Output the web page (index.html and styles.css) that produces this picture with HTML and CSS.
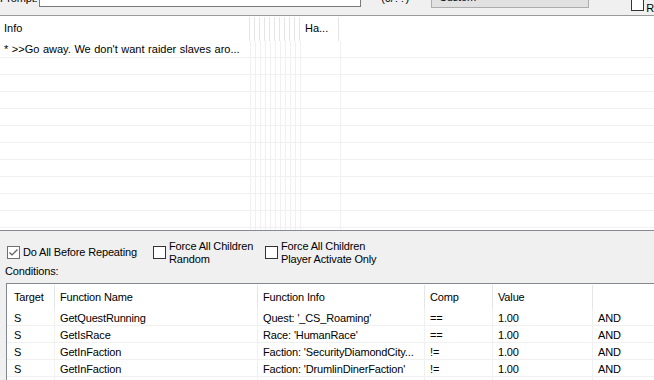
FILE: index.html
```html
<!DOCTYPE html>
<html lang="en">
<head>
    <meta charset="UTF-8">
    <title>Info</title>
    <link rel="stylesheet" href="styles.css">
</head>
<body>
    <div class="topo">
        <span class="rotulo prompt">Prompt:</span>
        <div class="entrada"></div>
        <span class="rotulo contagem">(0/??)</span>
        <div class="combo">Custom</div>
        <span class="caixa topo-caixa"></span>
        <span class="rotulo letra">R</span>
    </div>

    <div class="lista">
        <div class="lista-cab">
            <div class="cel">Info</div>
            <div class="cel"></div><div class="cel"></div><div class="cel"></div><div class="cel"></div><div class="cel"></div>
            <div class="cel"></div><div class="cel"></div><div class="cel"></div><div class="cel"></div><div class="cel"></div>
            <div class="cel">Ha...</div>
            <div class="cel fim"></div>
        </div>
        <div id="linhas"></div>
    </div>

    <div class="painel">
        <div class="opcoes">
            <label class="opcao primeira">
                <span class="caixa marcada">
                    <svg width="11" height="11" viewBox="0 0 11 11"><path d="M1.5 5.5 L4 8 L9.5 2.5" fill="none" stroke="#5a5a5a" stroke-width="1.2"/></svg>
                </span>
                <span>Do All Before Repeating</span>
            </label>
            <label class="opcao segunda">
                <span class="caixa"></span>
                <span>Force All Children<br>Random</span>
            </label>
            <label class="opcao">
                <span class="caixa"></span>
                <span>Force All Children<br>Player Activate Only</span>
            </label>
        </div>
        <div class="titulo">Conditions:</div>
        <div class="condicoes">
            <div class="cond-linha cond-cab">
                <div class="c">Target</div>
                <div class="c">Function Name</div>
                <div class="c">Function Info</div>
                <div class="c">Comp</div>
                <div class="c">Value</div>
                <div class="c"></div>
            </div>
            <div id="condicoes"></div>
        </div>
    </div>

    <script>
        const linhas = document.getElementById('linhas');
        for (let i = 0; i < 12; i++) {
            const linha = document.createElement('div');
            linha.className = 'linha';
            let html = '<div class="cel">' + (i === 0 ? "* &gt;&gt;Go away. We don't want raider slaves aro..." : '') + '</div>';
            for (let j = 0; j < 11; j++) html += '<div class="cel"></div>';
            html += '<div class="cel fim"></div>';
            linha.innerHTML = html;
            linhas.appendChild(linha);
        }

        const condicoes = [
            ['S', 'GetQuestRunning', "Quest: '_CS_Roaming'", '==', '1.00', 'AND'],
            ['S', 'GetIsRace', "Race: 'HumanRace'", '==', '1.00', 'AND'],
            ['S', 'GetInFaction', "Faction: 'SecurityDiamondCity...", '!=', '1.00', 'AND'],
            ['S', 'GetInFaction', "Faction: 'DrumlinDinerFaction'", '!=', '1.00', 'AND'],
            ['', '', '', '', '', '']
        ];
        const tabela = document.getElementById('condicoes');
        condicoes.forEach(function (c) {
            const linha = document.createElement('div');
            linha.className = 'cond-linha';
            c.forEach(function (v) {
                const cel = document.createElement('div');
                cel.className = 'c';
                cel.textContent = v;
                linha.appendChild(cel);
            });
            tabela.appendChild(linha);
        });
    </script>
</body>
</html>
```

FILE: styles.css
```css
body {
    margin: 0;
    width: 654px;
    height: 380px;
    overflow: hidden;
    background-color: #f0f0f0;
    font-family: "Liberation Sans", Arial, sans-serif;
    font-size: 11px;
    letter-spacing: -0.15px;
    color: #000;
}

/* faixa de cima, cortada pela janela */
.topo {
    height: 15px;
    display: flex;
    align-items: flex-end;
    overflow: hidden;
    border-bottom: 1px solid #9a9a9a;
}

.rotulo {
    line-height: 13px;
    white-space: nowrap;
}

.prompt {
    width: 39px;
    margin-bottom: 10px;
}

.entrada {
    width: 322px;
    height: 20px;
    margin-bottom: 8px;
    background-color: #fff;
    border: 1px solid #7a7a7a;
}

.contagem {
    margin-left: 20px;
    width: 50px;
    margin-bottom: 10px;
}

.combo {
    width: 159px;
    height: 21px;
    margin-bottom: 7px;
    padding: 3px 0 0 7px;
    line-height: 12px;
    box-sizing: border-box;
    background-color: #e1e1e1;
    border: 1px solid #adadad;
}

.topo-caixa {
    margin-left: 42px;
    margin-bottom: 4px;
}

.letra {
    margin-left: 2px;
    margin-bottom: 0px;
}

/* lista de respostas */
.lista {
    height: 214px;
    overflow: hidden;
    background-color: #fff;
    border-bottom: 1px solid #858a94;
}

.lista-cab {
    display: grid;
    grid-template-columns: 250px repeat(10, 5px) 39px 1fr;
    height: 25px;
}

.lista-cab .cel {
    border-right: 1px solid #e5e5e5;
    margin-top: 1px;
    line-height: 23px;
}

.cel {
    padding-left: 4px;
    overflow: hidden;
    white-space: nowrap;
    box-sizing: border-box;
    letter-spacing: 0;
}

.lista-cab .cel:nth-child(n+2),
.linha .cel:nth-child(n+2) {
    padding-left: 0;
}

.lista-cab .cel:nth-child(12) {
    padding-left: 5px;
}

.lista .fim {
    border-right: none !important;
}

.linha {
    display: grid;
    grid-template-columns: 251px repeat(10, 5px) 40px 1fr;
    height: 17px;
    box-sizing: border-box;
    border-bottom: 1px solid #f0f0f0;
}

.linha .cel {
    border-right: 1px solid #f0f0f0;
    line-height: 17px;
    word-spacing: 0.5px;
}

/* painel de baixo */
.painel {
    padding-top: 9px;
}

.opcoes {
    display: flex;
    height: 25px;
}

.opcao {
    display: flex;
    align-items: center;
    gap: 3px;
    line-height: 13px;
}

.primeira {
    margin-left: 7px;
    width: 146px;
}

.segunda {
    width: 112px;
}

.caixa {
    width: 13px;
    height: 13px;
    box-sizing: border-box;
    background-color: #fff;
    border: 1px solid #333;
    display: flex;
    align-items: center;
    justify-content: center;
    flex-shrink: 0;
}

.marcada {
    border-color: #707070;
}

.titulo {
    padding-left: 5px;
    line-height: 12px;
    margin-bottom: 6px;
}

.condicoes {
    margin-left: 6px;
    background-color: #fff;
    border-top: 1px solid #828790;
    border-left: 1px solid #828790;
    height: 120px;
}

.cond-linha {
    display: grid;
    grid-template-columns: 48px 203px 167px 68px 100px 1fr;
    height: 17px;
    box-sizing: border-box;
    border-bottom: 1px solid #f0f0f0;
}

.cond-linha .c {
    padding: 1px 0 0 5px;
    line-height: 16px;
    border-right: 1px solid #f0f0f0;
    white-space: nowrap;
    overflow: hidden;
}

.cond-linha .c:first-child {
    padding-left: 7px;
}

.cond-cab {
    height: 25px;
    border-bottom: none;
}

.cond-cab .c {
    border-right-color: #e5e5e5;
    margin-top: 1px;
    padding-top: 0;
    line-height: 24px;
}

.cond-linha .c:last-child {
    border-right: none;
}
```
